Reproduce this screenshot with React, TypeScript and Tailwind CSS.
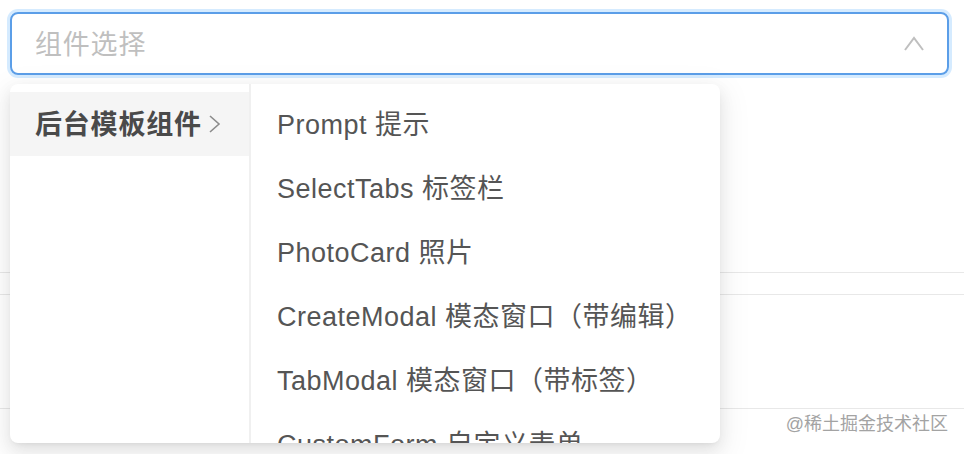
import React from 'react';

const items = [
  'Prompt 提示',
  'SelectTabs 标签栏',
  'PhotoCard 照片',
  'CreateModal 模态窗口（带编辑）',
  'TabModal 模态窗口（带标签）',
  'CustomForm 自定义表单',
];

const font = { fontFamily: '"Liberation Sans", "Noto Sans CJK SC", sans-serif' };

export default function App() {
  return (
    <div className="relative w-[964px] h-[454px] overflow-hidden bg-white" style={font}>
      {/* Select input */}
      <div className="pt-[12px] pl-[10px] pr-[15px]">
        <div className="flex h-[63px] items-center justify-between rounded-[8px] border-2 border-[#5b9ee8] pl-[23px] pr-[23px] shadow-[0_0_0_3px_rgba(24,144,255,0.18)]">
          <span className="pt-[3px] text-[27px] tracking-[0.8px] text-[#bfbfbf]">组件选择</span>
          <svg width="20" height="15" viewBox="0 0 20 15" fill="none">
            <polyline points="1,14 10,2 19,14" stroke="#bfbfbf" strokeWidth="2" />
          </svg>
        </div>
      </div>

      {/* page content behind the dropdown */}
      <div className="mt-[197px] h-[23px] border-y border-[#e8e8e8]" />
      <div className="h-[114px] border-b border-[#e8e8e8]" />

      <div className="absolute right-[16px] bottom-[16px] text-[18px] text-[#a3a3a3] [text-shadow:0_0_2px_#fff]">
        @稀土掘金技术社区
      </div>

      {/* Cascader dropdown */}
      <div className="absolute left-[10px] top-[84px] flex h-[359px] w-[710px] overflow-hidden rounded-[8px] bg-white shadow-[0_6px_16px_rgba(0,0,0,0.08),0_3px_6px_-4px_rgba(0,0,0,0.12),0_9px_28px_8px_rgba(0,0,0,0.05)]">
        <div className="w-[241px] shrink-0 border-r-2 border-[#f0f0f0] py-[8px]">
          <div className="flex h-[64px] items-center bg-[#f5f5f5] pl-[25px] pr-[14px]">
            <span className="pt-[2px] text-[27px] font-bold tracking-[0.8px] text-[#4a4a4a]">后台模板组件</span>
            <svg className="ml-[6px]" width="13" height="18" viewBox="0 0 13 18" fill="none">
              <polyline points="2,1 11,9 2,17" stroke="#8c8c8c" strokeWidth="1.6" />
            </svg>
          </div>
        </div>
        <div className="flex-1 py-[8px]">
          {items.map((t) => (
            <div key={t} className="flex h-[64px] items-center px-[26px] pt-[2px] text-[27px] tracking-[0.5px] text-[#555555] whitespace-nowrap">
              {t}
            </div>
          ))}
        </div>
      </div>
    </div>
  );
}
